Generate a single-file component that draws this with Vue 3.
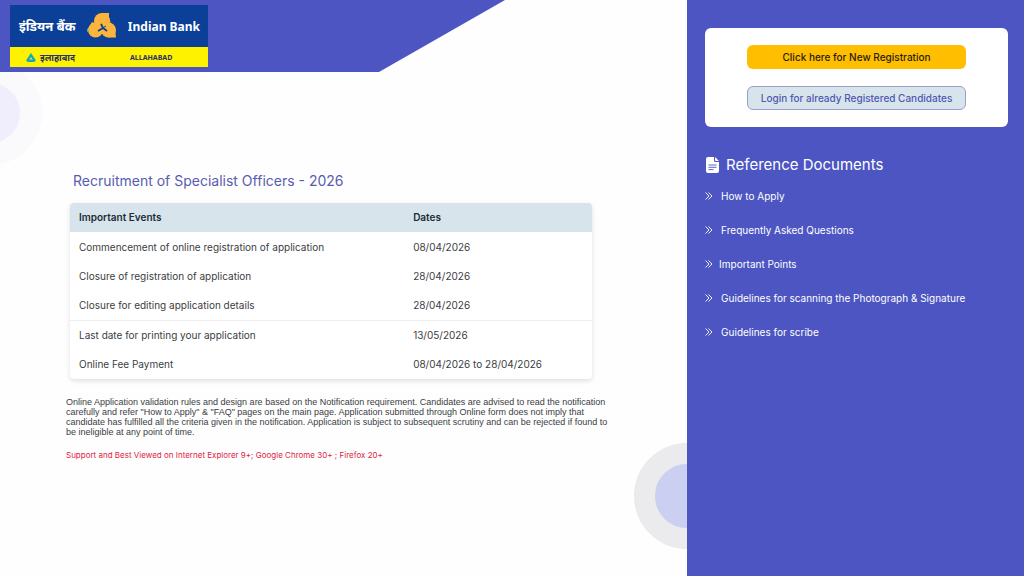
<script setup>
const events = [
  { name: 'Commencement of online registration of application', date: '08/04/2026' },
  { name: 'Closure of registration of application', date: '28/04/2026' },
  { name: 'Closure for editing application details', date: '28/04/2026' },
  { name: 'Last date for printing your application', date: '13/05/2026', ruled: true },
  { name: 'Online Fee Payment', date: '08/04/2026 to 28/04/2026' },
]
const documents = [
  { label: 'How to Apply' },
  { label: 'Frequently Asked Questions' },
  { label: 'Important Points', tight: true },
  { label: 'Guidelines for scanning the Photograph & Signature' },
  { label: 'Guidelines for scribe' },
]
</script>

<template>
  <div class="page">
    <main class="main">
      <span class="ring ring-left"></span>
      <span class="ring ring-right"></span>
      <header class="banner">
        <div class="logo">
          <div class="logo-top">
            <span class="hindi">इंडियन बैंक</span>
            <svg class="emblem" viewBox="0 0 32 28" aria-hidden="true">
              <g fill="#fbb53c">
                <circle cx="16" cy="9" r="8" />
                <circle cx="9.500" cy="18" r="7.500" />
                <circle cx="22.500" cy="18" r="7.500" />
                <path d="M15 1h8v5l2 5zM1 19l5-9 5 2zM22 25.500h8l-1-9zM10 12h12v10H10z" />
              </g>
              <path d="M1 16l2 3-2 1z" fill="#57b894" />
              <g fill="none" stroke="#0b3f98">
                <path d="M15 12l2 4M17 16l-5 3M17 16l4 3" stroke-width="1.800" />
                <path d="M17 16l3-2" stroke-width="1" />
              </g>
            </svg>
            <span class="english">Indian Bank</span>
          </div>
          <div class="logo-bottom">
            <svg class="triangle" viewBox="0 0 12 11" aria-hidden="true">
              <path d="M6 0l6 9-2 2H2L0 9z" fill="#18a9b5" />
              <path d="M6 5l2 3H4z" fill="#e6e936" />
            </svg>
            <span class="hindi-small">इलाहाबाद</span>
            <span class="city">ALLAHABAD</span>
          </div>
        </div>
      </header>

      <section class="content">
        <h1>Recruitment of Specialist Officers - 2026</h1>
        <table>
          <thead>
            <tr><th scope="col">Important Events</th><th scope="col">Dates</th></tr>
          </thead>
          <tbody>
            <tr v-for="event in events" :key="event.name" :class="{ ruled: event.ruled }">
              <td>{{ event.name }}</td>
              <td>{{ event.date }}</td>
            </tr>
          </tbody>
        </table>
        <p class="note">Online Application validation rules and design are based on the Notification requirement. Candidates are advised to read the notification carefully and refer "How to Apply" &amp; "FAQ" pages on the main page. Application submitted through Online form does not imply that candidate has fulfilled all the criteria given in the notification. Application is subject to subsequent scrutiny and can be rejected if found to be ineligible at any point of time.</p>
        <p class="support">Support and Best Viewed on Internet Explorer 9+; Google Chrome 30+ ; Firefox 20+</p>
      </section>
    </main>

    <aside class="side">
      <div class="card">
        <button type="button" class="register">Click here for New Registration</button>
        <button type="button" class="login">Login for already Registered Candidates</button>
      </div>
      <h2>
        <svg class="file" viewBox="0 0 13 16" aria-hidden="true">
          <path d="M2 0h6v3.500Q8 5 9.500 5H13v9q0 2-2 2H2q-2 0-2-2V2Q0 0 2 0z" fill="#fff" />
          <path d="M9 0l4 4h-3q-1 0-1-1z" fill="#fff" />
          <path d="M2.500 8h8M2.500 10.300h8M2.500 12.600h5" stroke="#4c55c2" stroke-width="0.900" />
        </svg>
        Reference Documents
      </h2>
      <ul>
        <li v-for="doc in documents" :key="doc.label">
          <a href="#" :class="{ tight: doc.tight }">
            <svg class="chevrons" viewBox="0 0 8 8" aria-hidden="true">
              <path d="M0.500 0.500L4 4L0.500 7.500M3.500 0.500L7 4L3.500 7.500" />
            </svg>
            <span>{{ doc.label }}</span>
          </a>
        </li>
      </ul>
    </aside>
  </div>
</template>

<style>
body {
  margin: 0;
}
</style>

<style scoped>
.page {
  display: grid;
  grid-template-columns: 67.1% 1fr;
  min-height: 100vh;
  font-family: Inter, "Noto Sans", sans-serif;
  color: #3b3d42;
}
.main {
  position: relative;
  overflow: hidden;
  background: #fefefe;
}
.banner {
  position: relative;
  box-sizing: border-box;
  height: 72px;
  width: 505px;
  padding: 5px 10px;
  background: #4c55c2;
  clip-path: polygon(0 0, 100% 0, 379px 100%, 0 100%);
}
.ring {
  position: absolute;
  border-radius: 50%;
}
.ring-left {
  box-sizing: border-box;
  left: -62px;
  top: 61px;
  width: 104px;
  height: 104px;
  border: 22px solid #faf9fb;
  background: #f0edfd;
}
.ring-right {
  box-sizing: border-box;
  right: -53px;
  top: 443px;
  width: 106px;
  height: 106px;
  border: 21px solid #ebebed;
  background: #cbcff2;
}
.logo {
  width: 198px;
}
.logo-top {
  display: flex;
  align-items: center;
  height: 42px;
  box-sizing: border-box;
  padding: 0 8px 0 9px;
  justify-content: space-between;
  background: #0b3f98;
  color: #fff;
  font-family: "Noto Sans", sans-serif;
  font-weight: 700;
  white-space: nowrap;
}
.hindi {
  font-size: 13px;
}
.english {
  font-size: 12px;
}
.emblem {
  width: 32px;
  height: 28px;
}
.logo-bottom {
  display: flex;
  align-items: center;
  height: 20px;
  padding-left: 16px;
  background: #fff200;
  color: #26316b;
  font-family: "Noto Sans", sans-serif;
  font-weight: 700;
}
.triangle {
  width: 10px;
  height: 9px;
}
.hindi-small {
  width: 87px;
  margin-left: 4px;
  margin-right: 3px;
  font-size: 9px;
}
.city {
  font-size: 7px;
}
.content {
  position: relative;
  padding: 100px 76px 40px 66px;
}
h1 {
  margin: 0 0 13px 7px;
  font-size: 14px;
  line-height: 18px;
  font-weight: 400;
  color: #5a5cb0;
}
table {
  width: calc(100% - 23px);
  margin-left: 4px;
  border-collapse: collapse;
  table-layout: fixed;
  background: #fff;
  border-radius: 4px;
  overflow: hidden;
  box-shadow: 0 2px 5px rgba(0, 0, 0, 0.12);
  font-size: 10px;
  line-height: 13px;
}
th,
td {
  box-sizing: border-box;
  padding: 8px 9px;
  text-align: left;
}
th {
  background: #d7e4ec;
  font-weight: 600;
  color: #212b36;
}
tbody tr:first-child td {
  padding-top: 9px;
}
th:first-child {
  width: 64%;
}
.ruled td {
  border-top: 1px solid #eeeef0;
}
.note {
  margin: 18px 0 0;
  font-family: "Liberation Sans", Arial, sans-serif;
  font-size: 9px;
  line-height: 10px;
}
.support {
  margin: 13px 0 0;
  font-size: 8px;
  line-height: 10px;
  color: #e0223f;
}
.side {
  padding: 28px 16px 28px 18px;
  background: #4c55c2;
  color: #fff;
}
.card {
  display: flex;
  flex-direction: column;
  align-items: center;
  gap: 17px;
  padding: 17px 42px;
  border-radius: 6px;
  background: #fff;
}
button {
  width: 100%;
  height: 24px;
  padding: 0;
  border: 0;
  border-radius: 6px;
  font: 500 10px/14px Inter, sans-serif;
}
.register {
  background: #ffbf00;
  color: #281d0c;
}
.login {
  border: 1px solid #989fcf;
  background: #d7e4ec;
  color: #5058b1;
}
h2 {
  display: flex;
  align-items: center;
  gap: 7px;
  margin: 28px 0 14px 1px;
  font-size: 15px;
  line-height: 20px;
  font-weight: 400;
}
.file {
  width: 13px;
  height: 16px;
}
ul {
  display: grid;
  gap: 20px;
  margin: 0;
  padding: 0;
  list-style: none;
}
a {
  display: flex;
  align-items: center;
  gap: 8px;
  font-size: 10px;
  line-height: 14px;
  color: #fff;
  text-decoration: none;
}
.tight {
  gap: 6px;
}
.chevrons {
  width: 8px;
  height: 8px;
  fill: none;
  stroke: #fff;
  stroke-width: 0.900;
}
</style>
